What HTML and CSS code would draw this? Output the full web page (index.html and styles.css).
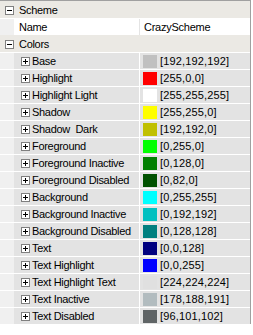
FILE: index.html
```html
<!DOCTYPE html>
<html lang="en">
<head>
    <meta charset="UTF-8">
    <title>Property Browser</title>
    <link rel="stylesheet" href="styles.css">
</head>
<body>
    <div class="browser">
        <div class="row group">
            <span class="toggle"><svg width="9" height="9" viewBox="0 0 9 9"><rect x="0.5" y="0.5" width="8" height="8" fill="#fff" stroke="#7f7f7f"/><path d="M2 4.5h5" stroke="#000"/></svg></span>
            <span class="group-label">Scheme</span>
        </div>
        <div class="row plain">
            <div class="gutter"></div>
            <div class="label name-label">Name</div>
            <div class="value"><span class="text-value">CrazyScheme</span></div>
        </div>
        <div class="row group">
            <span class="toggle"><svg width="9" height="9" viewBox="0 0 9 9"><rect x="0.5" y="0.5" width="8" height="8" fill="#fff" stroke="#7f7f7f"/><path d="M2 4.5h5" stroke="#000"/></svg></span>
            <span class="group-label">Colors</span>
        </div>
        <div id="colors"></div>
    </div>

    <script>
        // color roles shown in the browser
        const roles = [
            ['Base', [192, 192, 192]],
            ['Highlight', [255, 0, 0]],
            ['Highlight Light', [255, 255, 255]],
            ['Shadow', [255, 255, 0]],
            ['Shadow  Dark', [192, 192, 0]],
            ['Foreground', [0, 255, 0]],
            ['Foreground Inactive', [0, 128, 0]],
            ['Foreground Disabled', [0, 82, 0]],
            ['Background', [0, 255, 255]],
            ['Background Inactive', [0, 192, 192]],
            ['Background Disabled', [0, 128, 128]],
            ['Text', [0, 0, 128]],
            ['Text Highlight', [0, 0, 255]],
            ['Text Highlight Text', [224, 224, 224]],
            ['Text Inactive', [178, 188, 191]],
            ['Text Disabled', [96, 101, 102]]
        ];

        const plus = '<svg width="9" height="9" viewBox="0 0 9 9"><rect x="0.5" y="0.5" width="8" height="8" fill="#fff" stroke="#7f7f7f"/><path d="M2 4.5h5M4.5 2v5" stroke="#000"/></svg>';

        const list = document.getElementById('colors');
        roles.forEach(([name, rgb]) => {
            const row = document.createElement('div');
            row.className = 'row sub';
            row.innerHTML =
                '<div class="gutter"></div>' +
                '<div class="label"><span class="toggle">' + plus + '</span><span class="label-text"></span></div>' +
                '<div class="value"><span class="swatch" style="background: rgb(' + rgb.join(',') + ')"></span><span class="text-value">[' + rgb.join(',') + ']</span></div>';
            row.querySelector('.label-text').textContent = name.replace(/ /g, '\u00a0');
            list.appendChild(row);
        });
    </script>
</body>
</html>
```

FILE: styles.css
```css
* {
    margin: 0;
    padding: 0;
    box-sizing: border-box;
}

body {
    font-family: "Liberation Sans", Arial, sans-serif;
    font-size: 11px;
    color: #000;
    background: #fff;
}

.browser {
    width: 251px;
    border-top: 1px solid #a0a0a0;
    border-right: 1px solid #a0a0a0;
    background: #f0f0f0;
}

.row {
    display: flex;
    align-items: center;
    height: 17px;
    border-top: 1px solid #fff;
    white-space: nowrap;
    overflow: hidden;
}

.group {
    background: #ebe9e4;
    border-top-color: #ebe9e4;
}

.group .toggle {
    margin-left: 5px;
}

.group-label {
    margin-left: 5px;
    line-height: 16px;
    letter-spacing: -0.3px;
}

.toggle {
    display: flex;
    width: 9px;
    height: 9px;
}

.gutter {
    width: 14px;
    height: 16px;
    background: #f0f0f0;
    flex: none;
}

.label {
    display: flex;
    align-items: center;
    width: 126px;
    height: 16px;
    flex: none;
    border-right: 1px solid #fff;
    letter-spacing: -0.3px;
}

.label .toggle {
    margin-left: 7px;
}

.label-text {
    margin-left: 2px;
    line-height: 16px;
}

.name-label {
    padding-left: 5px;
    background: #fff;
    border-right-color: #e4e4e4;
    line-height: 16px;
}

.value {
    display: flex;
    align-items: center;
    flex: 1;
    height: 16px;
    padding-left: 4px;
}

.plain .value {
    background: #fff;
}

.plain .value .text-value {
    letter-spacing: -0.25px;
}

.sub {
    border-top-color: #fff;
}

.sub .label,
.sub .value {
    background: #e3e3e3;
}

.swatch {
    width: 14px;
    height: 13px;
    flex: none;
    margin-left: -1px;
    margin-right: 3px;
}

.text-value {
    line-height: 16px;
    letter-spacing: 0.15px;
}
```
